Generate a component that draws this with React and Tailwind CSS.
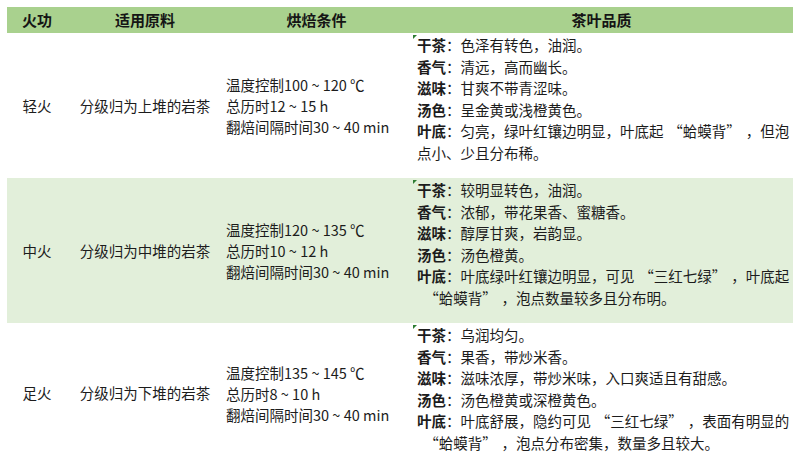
import React from 'react'

// small gaps around the curly quotes so they sit like full-width marks
const q = (s, lead = '\u2004') => `${lead}“${s}”\u2004`

const rows = [
  {
    level: '轻火',
    material: '分级归为上堆的岩茶',
    conditions: ['温度控制100 ~ 120 ℃', '总历时12 ~ 15 h', '翻焙间隔时间30 ~ 40 min'],
    bg: 'bg-white',
    h: 'h-[145px]',
    quality: [
      ['干茶', '色泽有转色，油润。'],
      ['香气', '清远，高而幽长。'],
      ['滋味', '甘爽不带青涩味。'],
      ['汤色', '呈金黄或浅橙黄色。'],
      ['叶底', `匀亮，绿叶红镶边明显，叶底起${q('蛤蟆背')}，但泡`, '点小、少且分布稀。'],
    ],
  },
  {
    level: '中火',
    material: '分级归为中堆的岩茶',
    conditions: ['温度控制120 ~ 135 ℃', '总历时10 ~ 12 h', '翻焙间隔时间30 ~ 40 min'],
    bg: 'bg-[#e2efda]',
    h: 'h-[145px]',
    quality: [
      ['干茶', '较明显转色，油润。'],
      ['香气', '浓郁，带花果香、蜜糖香。'],
      ['滋味', '醇厚甘爽，岩韵显。'],
      ['汤色', '汤色橙黄。'],
      ['叶底', `叶底绿叶红镶边明显，可见${q('三红七绿')}，叶底起`, `${q('蛤蟆背', '\u2002')}，泡点数量较多且分布明。`],
    ],
  },
  {
    level: '足火',
    material: '分级归为下堆的岩茶',
    conditions: ['温度控制135 ~ 145 ℃', '总历时8 ~ 10 h', '翻焙间隔时间30 ~ 40 min'],
    bg: 'bg-white',
    h: 'h-[140px]',
    quality: [
      ['干茶', '乌润均匀。'],
      ['香气', '果香，带炒米香。'],
      ['滋味', '滋味浓厚，带炒米味，入口爽适且有甜感。'],
      ['汤色', '汤色橙黄或深橙黄色。'],
      ['叶底', `叶底舒展，隐约可见${q('三红七绿')}，表面有明显的`, `${q('蛤蟆背', '\u2002')}，泡点分布密集，数量多且较大。`],
    ],
  },
]

const cols = 'grid grid-cols-[60px_156px_187px_383px]'

export default function App() {
  return (
    <div className="w-[800px] h-[459px] overflow-hidden bg-white pt-[7px] pl-[7px] font-['Noto_Sans_CJK_SC','Noto_Sans',sans-serif] text-[14.5px] text-[#1c1c1c]">
      <div className="w-[786px]">
        {/* header */}
        <div className={`${cols} h-[26px] items-center bg-[#a9d18e] font-bold text-[15px] text-[#151515]`}>
          <div className="text-center">火功</div>
          <div className="text-center">适用原料</div>
          <div className="text-center">烘焙条件</div>
          <div className="text-center">茶叶品质</div>
        </div>

        {rows.map((row) => (
          <div key={row.level} className={`${cols} ${row.h} ${row.bg}`}>
            <div className="flex items-center justify-center">{row.level}</div>
            <div className="flex items-center justify-center">{row.material}</div>
            <div className="flex flex-col justify-center pl-[3px] leading-[21px] whitespace-nowrap">
              {row.conditions.map((c) => (
                <div key={c}>{c}</div>
              ))}
            </div>
            <div className="relative pl-[7px] pt-[1px] leading-[21.6px] whitespace-pre">
              <span className="absolute left-[3px] top-[2px] w-0 h-0 border-t-[4px] border-r-[4px] border-t-[#2e7d32] border-r-transparent" />
              {row.quality.map(([label, text, extra]) => (
                <React.Fragment key={label}>
                  <div>
                    <span className="font-bold">{label}</span>：{text}
                  </div>
                  {extra && <div>{extra}</div>}
                </React.Fragment>
              ))}
            </div>
          </div>
        ))}
      </div>
    </div>
  )
}
